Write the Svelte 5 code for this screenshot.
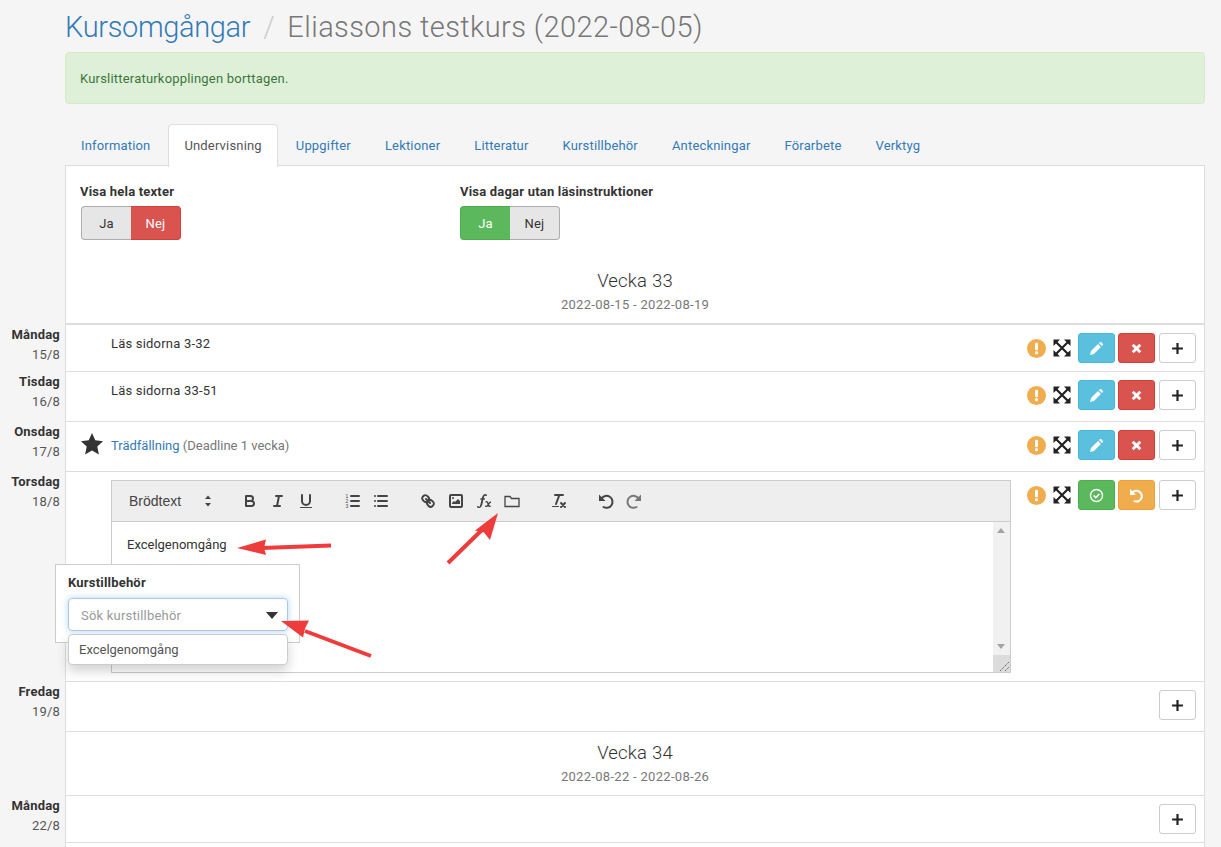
<script lang="ts">
	const tabs = ['Information', 'Undervisning', 'Uppgifter', 'Lektioner', 'Litteratur', 'Kurstillbehör', 'Anteckningar', 'Förarbete', 'Verktyg'];
</script>

{#snippet warn()}
	<svg class="warn" viewBox="0 0 18 18"><circle cx="9" cy="9" r="9" fill="#f0ad4e" /><rect x="7.6" y="3.6" width="2.8" height="7" rx="1" fill="#fff" /><rect x="7.6" y="11.6" width="2.8" height="2.8" rx="1" fill="#fff" /></svg>
{/snippet}

{#snippet expand()}
	<svg class="expand" viewBox="0 0 18 18"><path d="M3 3l12 12M15 3L3 15" stroke="#222" stroke-width="2.2" fill="none" /><path d="M0.5 0.5h6.5L0.5 7zM17.5 0.500v6.500L11 0.500zM0.5 17.500V11L7 17.500zM17.500 17.500H11l6.500-6.500z" fill="#222" /></svg>
{/snippet}

{#snippet plus()}
	<button class="btn plain"><svg class="ico" viewBox="0 0 12 12"><path d="M6 1v10M1 6h10" stroke="#222" stroke-width="2" fill="none" /></svg></button>
{/snippet}

{#snippet actions()}
	<div class="actions">
		{@render warn()}
		{@render expand()}
		<button class="btn info"><svg class="ico big" viewBox="0 0 14 14"><path d="M1 13l.9-3.600L8.400 2.900l2.700 2.700-6.500 6.500zM9.300 2l.8-.8a1 1 0 0 1 1.400 0l1.300 1.300a1 1 0 0 1 0 1.400l-.8.8z" fill="#fff" /></svg></button>
		<button class="btn danger"><svg class="ico" viewBox="0 0 12 12"><path d="M2.500 2.500l7 7M9.500 2.500l-7 7" stroke="#fff" stroke-width="2.600" fill="none" /></svg></button>
		{@render plus()}
	</div>
{/snippet}

<div class="page">
	<h1 class="crumbs"><span class="link">Kursomgångar</span><span class="sep">/</span><span class="course">Eliassons testkurs (2022-08-05)</span></h1>

	<div class="alert">Kurslitteraturkopplingen borttagen.</div>

	<ul class="tabs">
		{#each tabs as tab, i}
			<li class:active={i === 1}>{tab}</li>
		{/each}
	</ul>

	<div class="panel">
		<div class="toggles">
			<div class="toggle-group">
				<div class="toggle-label">Visa hela texter</div>
				<div class="toggle"><span>Ja</span><span class="red">Nej</span></div>
			</div>
			<div class="toggle-group">
				<div class="toggle-label">Visa dagar utan läsinstruktioner</div>
				<div class="toggle"><span class="green">Ja</span><span>Nej</span></div>
			</div>
		</div>
		<div class="week first">
			<div class="week-name">Vecka 33</div>
			<div class="week-dates">2022-08-15 - 2022-08-19</div>
		</div>
	</div>

	<div class="day" style="height: 47px">
		<div class="date"><b>Måndag</b><span>15/8</span></div>
		<div class="cell">
			<div class="entry">Läs sidorna 3-32</div>
			{@render actions()}
		</div>
	</div>
	<div class="day" style="height: 50px">
		<div class="date"><b>Tisdag</b><span>16/8</span></div>
		<div class="cell">
			<div class="entry">Läs sidorna 33-51</div>
			{@render actions()}
		</div>
	</div>
	<div class="day" style="height: 50px">
		<div class="date"><b>Onsdag</b><span>17/8</span></div>
		<div class="cell">
			<svg class="star" viewBox="0 0 24 24"><path d="M12 1l3.300 7.300 7.700.9-5.700 5.300 1.600 7.900L12 18.400l-6.900 4 1.600-7.900L1 9.200l7.700-.9z" fill="#333" /></svg>
			<div class="entry mid"><span class="link">Trädfällning</span> <span class="muted">(Deadline 1 vecka)</span></div>
			{@render actions()}
		</div>
	</div>
	<div class="day" style="height: 210px">
		<div class="date"><b>Torsdag</b><span>18/8</span></div>
		<div class="cell">
			<div class="editor">
				<div class="toolbar">
					<div class="format">
						<span>Brödtext</span>
						<svg class="q" viewBox="0 0 18 18"><path d="M6 7l3-3.500L12 7zM6 11l3 3.500L12 11z" fill="#444" /></svg>
					</div>
					<div class="tool-group">
						<svg class="q" viewBox="0 0 18 18"><path class="s" d="M5 4h4.500a2.500 2.500 0 0 1 0 5H5zM5 9h5.500a2.500 2.500 0 0 1 0 5H5z" /></svg>
						<svg class="q" viewBox="0 0 18 18"><path class="s" d="M7 4h6M5 14h6M8 14l2-10" /></svg>
						<svg class="q" viewBox="0 0 18 18"><path class="s" d="M5 3v6a4 4 0 0 0 8 0V3" /><rect x="3" y="15" width="12" height="1" rx=".5" fill="#444" /></svg>
					</div>
					<div class="tool-group">
						<svg class="q" viewBox="0 0 18 18"><path class="s" d="M7 4h8M7 9h8M7 14h8" /><text x="1.500" y="6" class="num">1</text><text x="1.500" y="11" class="num">2</text><text x="1.500" y="16" class="num">3</text></svg>
						<svg class="q" viewBox="0 0 18 18"><path class="s" d="M6 4h9M6 9h9M6 14h9M3 4h0M3 9h0M3 14h0" /></svg>
					</div>
					<div class="tool-group">
						<svg class="q" viewBox="0 0 18 18"><path class="s" d="M7 7l4 4" /><path class="s" d="M8.900 4.577a3.476 3.476 0 0 1 .36 4.679A3.476 3.476 0 0 1 4.577 8.900C3.185 7.500 2.035 6.400 4.217 4.217S7.500 3.185 8.900 4.577z" /><path class="s" d="M13.423 9.100a3.476 3.476 0 0 0-4.679-.36 3.476 3.476 0 0 0 .36 4.679c1.392 1.392 2.500 2.542 4.679.36S14.815 10.500 13.423 9.100z" /></svg>
						<svg class="q" viewBox="0 0 18 18"><rect class="s" x="3" y="3" width="12" height="12" rx="1" /><circle cx="6" cy="6" r="1" fill="#444" /><path d="M5 12v-1l2-2 1 1 3-3 2 2v3z" fill="#444" /></svg>
						<svg class="q" viewBox="0 0 18 18"><path d="M11.759 2.482a2.561 2.561 0 0 0-3.530.607A7.656 7.656 0 0 0 6.800 6.200C6.109 9.188 5.275 14.677 4.150 14.927a1.545 1.545 0 0 0-1.300-.933A.922.922 0 0 0 2 15.036S1.954 16 4.119 16s3.091-2.691 3.700-5.553c.177-.826.360-1.726.554-2.600L8.775 6.200c.381-1.421.807-2.521 1.306-2.676a1.014 1.014 0 0 0 1.020.56.966.966 0 0 0 .658-1.602z" fill="#444" /><rect x="5.150" y="6.200" width="5" height="1.600" rx=".8" fill="#444" /><path d="M10.500 10c1.500-.8 2.200.3 2.600 2s1 3 2.700 2M16 10c-1.300 0-2 1.300-2.900 2.800s-1.600 2-2.900 1.400" stroke="#444" stroke-width="1.400" fill="none" /></svg>
						<svg class="q" viewBox="0 0 18 18"><path class="s thin" d="M2 4.500h5l1.500 2H16v8H2z" /></svg>
					</div>
					<div class="tool-group">
						<svg class="q" viewBox="0 0 18 18"><path class="s" d="M5 3h8M6 12l3.350-9M11 11l4 4M15 11l-4 4" /><rect x="2" y="14" width="7" height="1" rx=".5" fill="#444" /></svg>
					</div>
					<div class="tool-group">
						<svg class="q" viewBox="0 0 18 18"><path d="M2 2.500v6.500h6.500z" fill="#444" /><path class="s" d="M4.500 6.500a6 6 0 1 1 2 8.500" /></svg>
						<svg class="q" viewBox="0 0 18 18"><path d="M16 2.500v6.500H9.500z" fill="#777" /><path class="s grey" d="M13.500 6.500a6 6 0 1 0-2 8.500" /></svg>
					</div>
				</div>
				<div class="body">
					<p>Excelgenomgång</p>
					<div class="scrollbar">
						<i class="up"></i>
						<i class="down"></i>
						<svg class="grip" viewBox="0 0 17 17"><path d="M7 16l9-9M12 16l4-4" stroke="#666" stroke-width="1" stroke-dasharray="1.500 .8" fill="none" /></svg>
					</div>
				</div>
			</div>
			<div class="actions">
				{@render warn()}
				{@render expand()}
				<button class="btn success"><svg class="ico big" viewBox="0 0 14 14"><circle cx="7" cy="7" r="5.600" stroke="#fff" stroke-width="1.300" fill="none" /><path d="M4.300 7l2 2 3.400-3.400" stroke="#fff" stroke-width="1.500" fill="none" /></svg></button>
				<button class="btn warning"><svg class="ico big" viewBox="0 0 14 14"><path d="M1 1v5.500h5.500z" fill="#fff" /><path d="M3 4.500a5 5 0 1 1 1.500 7.500" stroke="#fff" stroke-width="2" fill="none" /></svg></button>
				{@render plus()}
			</div>
		</div>
	</div>
	<div class="day" style="height: 50px">
		<div class="date"><b>Fredag</b><span>19/8</span></div>
		<div class="cell">
			<div class="actions">{@render plus()}</div>
		</div>
	</div>
	<div class="week-row">
		<div class="week-name">Vecka 34</div>
		<div class="week-dates">2022-08-22 - 2022-08-26</div>
	</div>
	<div class="day" style="height: 47px">
		<div class="date"><b>Måndag</b><span>22/8</span></div>
		<div class="cell">
			<div class="actions">{@render plus()}</div>
		</div>
	</div>
	<div class="tail"></div>

	<!-- popup over the editor -->
	<div class="popup">
		<div class="popup-title">Kurstillbehör</div>
		<div class="search"><span>Sök kurstillbehör</span><i class="caret"></i></div>
		<div class="results">Excelgenomgång</div>
	</div>

	<!-- annotation arrows -->
	<svg class="arrows" viewBox="0 0 1221 847">
		<path d="M331 545.500L262 548" class="shaft" />
		<path d="M237 548l29-8.500-2 8.500 2 7z" fill="#ee3b3b" />
		<path d="M448 563L488 524" class="shaft" />
		<path d="M498 513l-8 27-6-7.500-9-2z" fill="#ee3b3b" />
		<path d="M371 656L305 631" class="shaft" />
		<path d="M281 621l28-.5-4 8-2 9z" fill="#ee3b3b" />
	</svg>
</div>

<style>
	:global(body) {
		margin: 0;
		background: #f5f5f5;
		font-family: 'Roboto', 'Liberation Sans', sans-serif;
		font-size: 13px;
		letter-spacing: 0.2px;
		color: #333;
	}

	.page {
		position: relative;
		width: 1221px;
		height: 847px;
		overflow: hidden;
	}

	.crumbs {
		margin: 0 16px 0 65px;
		height: 52px;
		font-size: 29px;
		font-weight: 300;
		line-height: 54px;
		letter-spacing: -0.35px;
		color: #777;
	}

	.link { color: #337ab7; }
	.sep { margin: 0 13px; color: #ccc; }
	.course { letter-spacing: 0.42px; }

	.alert {
		margin: 0 16px 0 65px;
		height: 50px;
		line-height: 51px;
		padding: 0 14px;
		background: #dff0d8;
		border: 1px solid #d6e9c6;
		border-radius: 4px;
		color: #3c763d;
	}

	.tabs {
		display: flex;
		margin: 20px 16px 0 65px;
		padding: 0;
		list-style: none;
		height: 41px;
		letter-spacing: 0.17px;
	}

	.tabs li {
		padding: 0 15px;
		margin-right: 2px;
		border: 1px solid transparent;
		border-bottom: 0;
		line-height: 41px;
		color: #337ab7;
	}

	.tabs li.active {
		background: #fff;
		border-color: #ddd;
		border-radius: 4px 4px 0 0;
		color: #555;
		height: 42px;
		position: relative;
		z-index: 1;
	}

	.panel {
		margin: 0 16px 0 65px;
		background: #fff;
		border: 1px solid #ddd;
		height: 157px;
		border-bottom: 2px solid #ddd;
	}

	.toggles {
		display: grid;
		grid-template-columns: 379px 1fr;
		padding: 18px 15px 0 14px;
	}

	.toggle-label {
		font-weight: 700;
		line-height: 16px;
		margin-bottom: 6px;
	}

	.toggle {
		display: flex;
		margin-left: 1px;
	}

	.toggle span {
		box-sizing: border-box;
		width: 50px;
		height: 34px;
		text-align: center;
		line-height: 33px;
		background: #e6e6e6;
		border: 1px solid #adadad;
		color: #333;
	}

	.toggle span:first-child { border-radius: 4px 0 0 4px; border-right: 0; }
	.toggle span:last-child { border-radius: 0 4px 4px 0; border-left: 0; }
	.toggle .red { background: #d9534f; border-color: #d43f3a; color: #fff; }
	.toggle .green { background: #5cb85c; border-color: #4cae4c; color: #fff; }
	.toggle-group:last-child { margin-left: 1px; }
	.toggle-group:last-child .toggle { margin-left: 0; }

	.week { text-align: center; }
	.week.first { padding-top: 31px; }

	.week-name {
		font-size: 18.5px;
		font-weight: 300;
		line-height: 20px;
	}

	.week-dates {
		font-size: 13px;
		letter-spacing: 0.3px;
		line-height: 20px;
		margin-top: 4px;
		color: #777;
	}

	.day {
		display: grid;
		grid-template-columns: 65px 1fr;
		margin-right: 16px;
	}

	.date {
		display: flex;
		flex-direction: column;
		align-items: flex-end;
		padding-right: 5px;
		line-height: 20px;
		color: #555;
	}

	.date b { color: #333; }

	.cell {
		position: relative;
		display: flex;
		align-items: flex-start;
		background: #fff;
		border: 1px solid #ddd;
		border-top: 0;
		padding-left: 45px;
		min-width: 0;
	}

	.entry {
		flex: 1;
		padding-top: 10px;
		line-height: 18px;
	}

	.entry.mid { padding-top: 15px; letter-spacing: 0; }
	.muted { color: #777; }

	.star {
		position: absolute;
		left: 14px;
		top: 10px;
		width: 24px;
		height: 24px;
	}

	.actions {
		display: flex;
		align-items: center;
		gap: 3px;
		margin: 8px 8px 0 auto;
	}

	.warn { width: 19px; height: 19px; margin-right: 4px; }
	.expand { width: 18px; height: 18px; margin-right: 4px; }

	.btn {
		display: flex;
		align-items: center;
		justify-content: center;
		width: 37px;
		height: 30px;
		padding: 0;
		border: 1px solid transparent;
		border-radius: 3px;
	}

	.btn.info { background: #5bc0de; border-color: #46b8da; }
	.btn.danger { background: #d9534f; border-color: #d43f3a; }
	.btn.success { background: #5cb85c; border-color: #4cae4c; }
	.btn.warning { background: #f0ad4e; border-color: #eea236; }
	.btn.plain { background: #fff; border-color: #ccc; margin-left: 1px; }

	.ico { width: 13px; height: 13px; }
	.ico.big { width: 15px; height: 15px; }

	.editor {
		box-sizing: border-box;
		width: 900px;
		height: 193px;
		margin-top: 8px;
		border: 1px solid #ccc;
		flex: none;
		display: flex;
		flex-direction: column;
	}

	.toolbar {
		display: flex;
		align-items: center;
		height: 40px;
		background: #eee;
		border-bottom: 1px solid #ccc;
		padding-left: 17px;
	}

	.format {
		display: flex;
		align-items: center;
		justify-content: space-between;
		width: 88px;
		margin-right: 24px;
		font-family: 'Liberation Sans', sans-serif;
		font-size: 14px;
		font-weight: 500;
		letter-spacing: 0;
		color: #444;
	}

	.tool-group {
		display: flex;
		gap: 10px;
		margin-right: 29px;
	}

	.q { width: 18px; height: 18px; display: block; }

	.s {
		fill: none;
		stroke: #444;
		stroke-width: 2;
		stroke-linecap: round;
		stroke-linejoin: round;
	}

	.s.thin { stroke-width: 1.3; stroke-linejoin: miter; }
	.s.grey { stroke: #777; }
	.num { font-size: 5px; font-family: 'Liberation Sans', sans-serif; fill: #444; }

	.body {
		position: relative;
		flex: 1;
		background: #fff;
		padding: 14px 15px;
	}

	.body p {
		margin: 0;
		line-height: 18px;
		letter-spacing: 0;
	}

	.scrollbar {
		position: absolute;
		top: 0;
		right: 0;
		bottom: 0;
		width: 17px;
		background: #f1f1f1;
	}

	.scrollbar .up, .scrollbar .down {
		position: absolute;
		left: 4px;
		border-left: 4px solid transparent;
		border-right: 4px solid transparent;
	}

	.scrollbar .up { top: 6px; border-bottom: 5px solid #a3a3a3; }
	.scrollbar .down { bottom: 23px; border-top: 5px solid #a3a3a3; }

	.grip {
		position: absolute;
		left: 0;
		bottom: 0;
		width: 17px;
		height: 17px;
		background: #dcdcdc;
	}

	.week-row {
		margin: 0 16px 0 65px;
		height: 64px;
		background: #fff;
		border: 1px solid #ddd;
		border-top: 0;
		text-align: center;
		padding-top: 11px;
		box-sizing: border-box;
	}

	.tail {
		margin: 0 16px 0 65px;
		height: 10px;
		background: #fff;
		border-left: 1px solid #ddd;
		border-right: 1px solid #ddd;
	}

	.popup {
		position: absolute;
		left: 55px;
		top: 564px;
		width: 245px;
		height: 79px;
		box-sizing: border-box;
		background: #fff;
		border: 1px solid #ccc;
		padding: 10px 12px;
	}

	.popup-title {
		font-weight: 700;
		line-height: 16px;
		margin-bottom: 7px;
	}

	.search {
		display: flex;
		align-items: center;
		justify-content: space-between;
		box-sizing: border-box;
		width: 220px;
		height: 33px;
		padding: 1px 9px 0 12px;
		border: 1px solid #a9c9e6;
		border-radius: 4px;
		box-shadow: 0 0 6px rgba(102, 175, 233, 0.5);
		color: #999;
	}

	.caret {
		border-left: 6px solid transparent;
		border-right: 6px solid transparent;
		border-top: 7px solid #333;
	}

	.results {
		position: relative;
		box-sizing: border-box;
		width: 220px;
		height: 31px;
		margin-top: 3px;
		padding-left: 10px;
		line-height: 30px;
		background: #fff;
		border: 1px solid #ccc;
		border-radius: 4px;
		box-shadow: 0 6px 12px rgba(0, 0, 0, 0.18);
		color: #555;
		letter-spacing: 0;
	}

	.arrows {
		position: absolute;
		inset: 0;
		width: 1221px;
		height: 847px;
		pointer-events: none;
	}

	.shaft {
		fill: none;
		stroke: #ee3b3b;
		stroke-width: 4;
	}
</style>
